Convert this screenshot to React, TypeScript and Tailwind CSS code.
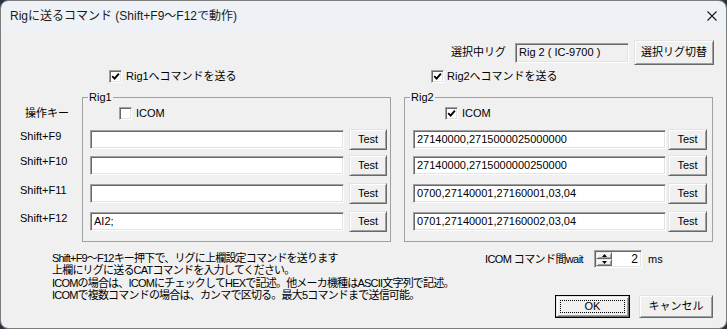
const sunken =
  "bg-white border border-t-[#a0a0a0] border-l-[#a0a0a0] border-b-white border-r-white shadow-[inset_1px_1px_0_#696969,inset_-1px_-1px_0_#e3e3e3]";
const raised =
  "bg-[#f0f0f0] border border-t-[#e3e3e3] border-l-[#e3e3e3] border-b-[#696969] border-r-[#696969] shadow-[inset_1px_1px_0_#ffffff,inset_-1px_-1px_0_#a0a0a0]";

const Check = ({ checked, label, gap }: { checked: boolean; label: string; gap: string }) => (
  <div className={`flex items-center h-[13px] ${gap}`}>
    <span className={`w-[13px] h-[13px] flex items-center justify-center ${sunken}`}>
      {checked && (
        <svg width="9" height="9" viewBox="0 0 9 9">
          <path d="M1.2 4.2 L3.6 6.6 L7.9 1.6" stroke="#000" strokeWidth="1.9" fill="none" />
        </svg>
      )}
    </span>
    <span className="leading-[13px]">{label}</span>
  </div>
);

const Btn = ({ label, w, h }: { label: string; w: string; h: string }) => (
  <div className={`${w} ${h} ${raised} flex items-center justify-center shrink-0`}>{label}</div>
);

const Field = ({ value, w }: { value: string; w: string }) => (
  <div className={`${w} h-[19px] ${sunken} flex items-center px-[3px] shrink-0 whitespace-nowrap overflow-hidden`}>
    {value}
  </div>
);

const CmdRow = ({ value, inputW, btnW, gap, mt }: { value: string; inputW: string; btnW: string; gap: string; mt: string }) => (
  <div className={`flex items-center h-[21px] ${gap} ${mt}`}>
    <Field value={value} w={inputW} />
    <Btn label="Test" w={btnW} h="h-[21px]" />
  </div>
);

export default function App() {
  const rig1 = ["", "", "", "AI2;"];
  const rig2 = [
    "27140000,2715000025000000",
    "27140000,2715000000250000",
    "0700,27140001,27160001,03,04",
    "0701,27140001,27160002,03,04",
  ];
  const rowMt = ["mt-[9px]", "mt-[5px]", "mt-[7px]", "mt-[7px]"];
  const notes = [
    "Shift+F9〜F12キー押下で、リグに上欄設定コマンドを送ります",
    "上欄にリグに送るCATコマンドを入力してください。",
    "ICOMの場合は、ICOMにチェックしてHEXで記述。他メーカ機種はASCII文字列で記述。",
    "ICOMで複数コマンドの場合は、カンマで区切る。最大5コマンドまで送信可能。",
  ];

  return (
    <div className="w-[727px] h-[329px] bg-[#2a3340] font-['Liberation_Sans','Noto_Sans_CJK_JP',sans-serif] text-[11px] text-black">
      <div className="w-full h-full rounded-[8px] overflow-hidden border border-[#7d7d7d] flex flex-col">
        {/* title bar */}
        <div className="h-[30px] bg-[#eef2f6] flex items-center justify-between pl-[9px] pr-[9px] shrink-0">
          <span className="text-[12px] text-[#1a1a1a]">Rigに送るコマンド (Shift+F9〜F12で動作)</span>
          <svg width="10" height="10" viewBox="0 0 10 10">
            <path d="M0.5 0.5 L9.5 9.5 M9.5 0.5 L0.5 9.5" stroke="#1a1a1a" strokeWidth="1.1" />
          </svg>
        </div>

        <div className="flex-1 bg-[#f0f0f0] flex flex-col">
          {/* selected rig */}
          <div className="mt-[9px] h-[25px] flex items-center justify-end pr-[12px]">
            <span>選択中リグ</span>
            <div className="ml-[9px] w-[114px] h-[20px] flex items-center px-[3px] bg-[#f0f0f0] border border-t-[#a0a0a0] border-l-[#a0a0a0] border-b-white border-r-white shadow-[inset_1px_1px_0_#696969,inset_-1px_-1px_0_#e3e3e3]">
              Rig 2 ( IC-9700 )
            </div>
            <div className="ml-[5px]">
              <Btn label="選択リグ切替" w="w-[80px]" h="h-[25px]" />
            </div>
          </div>

          {/* send checkboxes */}
          <div className="mt-[5px] flex pl-[108px]">
            <div className="w-[322px]">
              <Check checked label="Rig1へコマンドを送る" gap="gap-[4px]" />
            </div>
            <Check checked label="Rig2へコマンドを送る" gap="gap-[3px]" />
          </div>

          {/* groups */}
          <div className="mt-[8px] flex">
            <div className="w-[81px] pl-[19px] flex flex-col leading-[13px]">
              <span className="mt-[16px] pl-[5px]">操作キー</span>
              <span className="mt-[10px]">Shift+F9</span>
              <span className="mt-[12px]">Shift+F10</span>
              <span className="mt-[16px]">Shift+F11</span>
              <span className="mt-[15px]">Shift+F12</span>
            </div>

            <fieldset className="w-[309px] border border-[#a0a0a0] pb-[9px] flex flex-col">
              <legend className="ml-[5px] px-[1px] leading-[13px]">Rig1</legend>
              <div className="mt-[3px] pl-[36px]">
                <Check checked={false} label="ICOM" gap="gap-[4px]" />
              </div>
              <div className="pl-[7px]">
                {rig1.map((v, i) => (
                  <CmdRow key={i} value={v} inputW="w-[254px]" btnW="w-[38px]" gap="gap-[5px]" mt={rowMt[i]} />
                ))}
              </div>
            </fieldset>

            <fieldset className="ml-[13px] w-[309px] border border-[#a0a0a0] pb-[9px] flex flex-col">
              <legend className="ml-[5px] px-[1px] leading-[13px]">Rig2</legend>
              <div className="mt-[3px] pl-[40px]">
                <Check checked label="ICOM" gap="gap-[4px]" />
              </div>
              <div className="pl-[8px]">
                {rig2.map((v, i) => (
                  <CmdRow key={i} value={v} inputW="w-[253px]" btnW="w-[39px]" gap="gap-[2px]" mt={rowMt[i]} />
                ))}
              </div>
            </fieldset>
          </div>

          {/* bottom */}
          <div className="flex flex-1">
            <div className="flex-1 min-w-0 pl-[51px] pt-[10px] flex flex-col leading-[12.4px] whitespace-nowrap tracking-[-0.8px]">
              {notes.map((n) => (
                <span key={n}>{n}</span>
              ))}
            </div>
            <div className="w-[241px] shrink-0 flex flex-col">
              <div className="mt-[8px] h-[18px] flex items-center">
                <span className="w-[109px] whitespace-nowrap tracking-[-0.6px]">ICOM コマンド間wait</span>
                <div className={`w-[48px] h-[18px] ${sunken} flex items-center`}>
                  <div className="ml-[1px] w-[16px] h-[14px] flex flex-col">
                    <div className={`h-[7px] ${raised} flex items-center justify-center`}>
                      <svg width="5" height="3" viewBox="0 0 5 3"><path d="M2.5 0 L5 3 L0 3 Z" fill="#000" /></svg>
                    </div>
                    <div className={`h-[7px] ${raised} flex items-center justify-center`}>
                      <svg width="5" height="3" viewBox="0 0 5 3"><path d="M0 0 L5 0 L2.5 3 Z" fill="#000" /></svg>
                    </div>
                  </div>
                  <span className="flex-1 text-right pr-[3px] text-[12px]">2</span>
                </div>
                <span className="ml-[6px]">ms</span>
              </div>
              <div className="mt-[27px] flex justify-end gap-[9px] pr-[13px]">
                <div className="w-[75px] h-[23px] border border-black">
                  <div className={`w-full h-full ${raised} flex items-center justify-center p-[3px]`}>
                    <div className="w-full h-full border border-dotted border-black flex items-center justify-center">OK</div>
                  </div>
                </div>
                <Btn label="キャンセル" w="w-[74px]" h="h-[23px]" />
              </div>
            </div>
          </div>
        </div>
      </div>
    </div>
  );
}
